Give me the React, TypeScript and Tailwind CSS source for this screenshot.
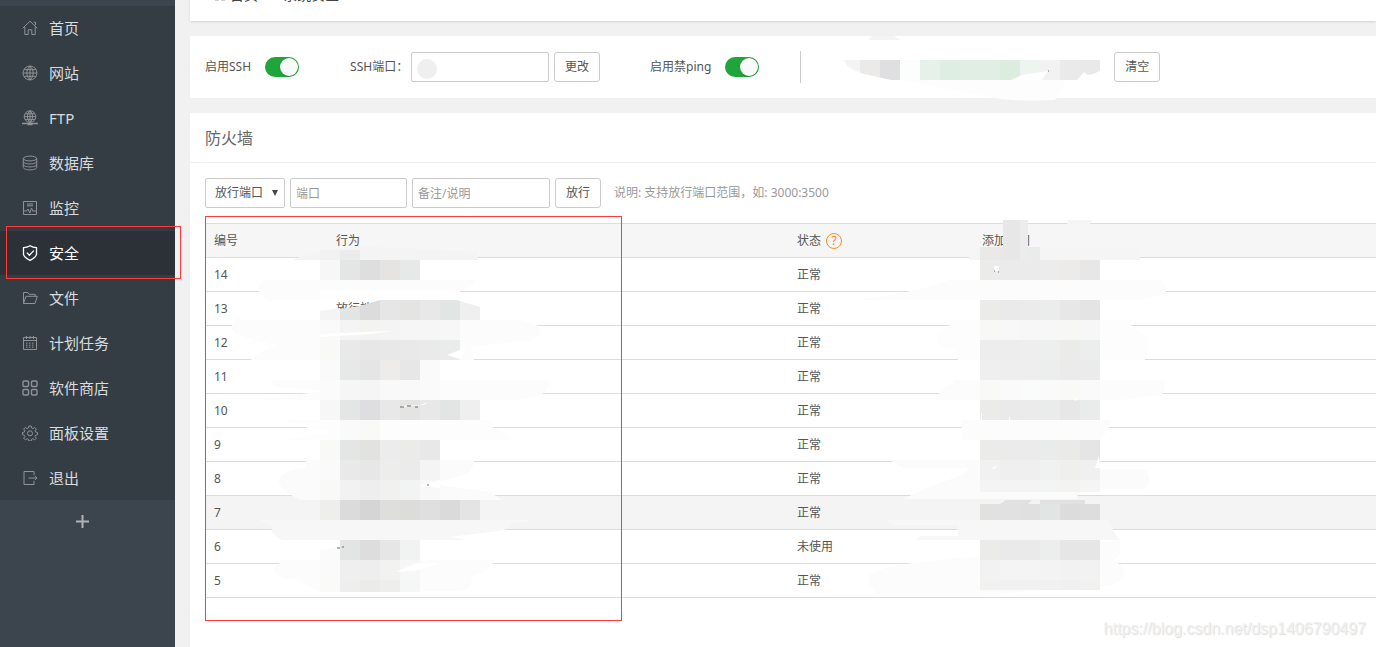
import type { ReactNode } from "react"
import { useState } from "react"

const menuItems: { label: string; icon: ReactNode }[] = [
  {
    label: "首页",
    icon: <path d="M.7 8.3 8 1.2l7.3 7.1M11.8 2.2h1.7v3M2.8 7v7.5h3.4V9.8h3.6v4.7h3.4V7" />,
  },
  {
    label: "网站",
    icon: <path d="M8 1a7 7 0 1 0 0 14A7 7 0 0 0 8 1ZM1 8h14M2 4.7h12M2 11.3h12M8 1v14M8 1C3.8 4.6 3.8 11.4 8 15M8 1c4.200 3.600 4.200 10.400 0 14" />,
  },
  {
    label: "FTP",
    icon: (
      <>
        <path d="M8 .8a5.800 5.800 0 1 0 0 11.600A5.800 5.800 0 0 0 8 .8ZM2.200 6.600h11.600M3 3.800h10M3 9.400h10M8 .8v11.600M8 .8c-3.400 3-3.400 8.600 0 11.600M8 .8c3.400 3 3.400 8.600 0 11.600" />
        <path d="M0 13.500h16M5.500 14.500h5" strokeWidth="1.600" />
      </>
    ),
  },
  {
    label: "数据库",
    icon: (
      <>
        <ellipse cx="8" cy="3.500" rx="6.700" ry="2.400" />
        <path d="M1.300 3.500v9c0 1.300 3 2.400 6.700 2.400s6.700-1.100 6.700-2.400v-9M1.300 6.500c0 1.300 3 2.400 6.700 2.400s6.700-1.100 6.700-2.400M1.300 9.500c0 1.300 3 2.400 6.700 2.400s6.700-1.100 6.700-2.400" />
      </>
    ),
  },
  {
    label: "监控",
    icon: <path d="M1.500 1.500h13v13h-13ZM5 4h6M5 5.800h6M1.500 11h3l1.500-2 1.800 4L9.500 8l1.200 3h3.800" />,
  },
  {
    label: "安全",
    icon: (
      <path
        d="M8 .8C6 2.100 3.800 2.700 1.500 2.700v6.200c0 3 3.500 5 6.500 6.500 3-1.500 6.500-3.500 6.500-6.500V2.700C12.200 2.700 10 2.100 8 .8ZM4.800 7.600l2.600 2.600 4.400-4.600"
        strokeWidth="1.300"
      />
    ),
  },
  {
    label: "文件",
    icon: <path d="M1.500 13.500v-11h4.300l1.400 1.800h6v2M1.500 13.500 4 6.300h11.300l-2.300 7.200Z" />,
  },
  {
    label: "计划任务",
    icon: (
      <>
        <path d="M1.500 2.500h13v12h-13ZM1.500 5.500h13M4.500 1v3M8 1v3M11.500 1v3" />
        <path d="M4 8.200h8M4 10.200h8M4 12.200h8" strokeDasharray="1.500 1.500" />
      </>
    ),
  },
  {
    label: "软件商店",
    icon: (
      <g strokeWidth="1.400">
        <rect x="1" y="1" width="5.500" height="5.500" rx="1" />
        <rect x="9.500" y="1" width="5.500" height="5.500" rx="1" />
        <rect x="1" y="9.500" width="5.500" height="5.500" rx="1" />
        <rect x="9.500" y="9.500" width="5.500" height="5.500" rx="1" />
      </g>
    ),
  },
  {
    label: "面板设置",
    icon: (
      <>
        <path d="M6.800 1h2.400l.4 2 1.300.6 1.700-1.200 1.700 1.700-1.200 1.700.6 1.300 1.800.4v2.200l-1.800.5-.6 1.300 1.200 1.700-1.700 1.700-1.700-1.200-1.300.6-.4 1.700H6.800l-.4-1.700-1.300-.6-1.700 1.200-1.700-1.700 1.200-1.700-.6-1.300-1.800-.5V7.500l1.800-.4.6-1.300-1.200-1.700 1.700-1.700 1.700 1.200 1.300-.6Z" />
        <circle cx="8" cy="8.300" r="2.500" />
      </>
    ),
  },
  {
    label: "退出",
    icon: <path d="M12 5V1.500H2v13h10V11M6.500 8h8.500M12.800 5.800 15 8l-2.200 2.200" />,
  },
]

const rules = [
  { id: 14, action: "", status: "正常" },
  { id: 13, action: "放行端口", status: "正常" },
  { id: 12, action: "", status: "正常" },
  { id: 11, action: "", status: "正常" },
  { id: 10, action: "", status: "正常" },
  { id: 9, action: "", status: "正常" },
  { id: 8, action: "", status: "正常" },
  { id: 7, action: "", status: "正常" },
  { id: 6, action: "", status: "未使用" },
  { id: 5, action: "", status: "正常" },
]

// Soft strokes that hide the row lines around the mosaic
const smears: { d: string; fill: string }[] = [
  { d: "M292 260l8-3 20-5 40-6 118 6v8Z", fill: "#f4f4f4" },
  { d: "M264 280h212q-3 8-16 11v4l-80 5-60 0h-52q-16-8-4-20Z", fill: "#fcfcfc" },
  { d: "M320 290h140v12H320Z", fill: "#fefefe" },
  { d: "M240 315v5h280q22 4 21 12-4 9-20 9l-50 6 3 13H251q6-9 26-14l-40-11q-12-10 3-18Z", fill: "#fcfcfc" },
  { d: "M270 380h278q3 10-8 15-14 5-30 5H255l70-9-50-4Z", fill: "#fcfcfc" },
  { d: "M278 420h215v8q14 4 17 12H280l56-8-29-4v-4Z", fill: "#fdfdfd" },
  { d: "M306 460h168q0 12-14 16l-30 8 60 8 12 8H300q-22-11-21-20 2-10 27-12Z", fill: "#fbfbfb" },
  { d: "M259 520h275l-24 4q0 6-12 7l-48 6 16 3H282q-12-6-10-13Z", fill: "#f7f7f7" },
  { d: "M320 550l20-4v-6h80v20H320Z", fill: "#fbfbfb" },
  { d: "M282 560h212q-2 10-22 16 0 14-12 15H320q-16-6-20-11-24-1-26-10Z", fill: "#fcfcfc" },
  { d: "M969 249h173l-2 11H969ZM1067 224l1-4h24l-2 4Z", fill: "#f5f5f5" },
  { d: "M860 299q50-5 90-19h212q6 8 3 14l-25 6H860Z", fill: "#fcfcfc" },
  { d: "M949 320h183l-1 8q18 4 18 20l-4 12H958l-2-10q-20-2-19-14 2-9 14-11Z", fill: "#fdfdfd" },
  { d: "M951 380h213q3 12-4 15l-40 5H938l1-8q4-6 16-9Z", fill: "#fcfcfc" },
  { d: "M961 420h150l-3 10-8 10H963Z", fill: "#fcfcfc" },
  { d: "M890 460h208l-2 9h48q10 10 0 20h-64l-4 10H903q28-14 60-24l6-7h-66Z", fill: "#fbfbfb" },
  { d: "M887 520h220l12 20h-203l4-4h38l-1-11h-63Z", fill: "#f7f7f7" },
  { d: "M942 560l178-20v14l-6 6q13 8 11 16-6 10-25 10l-120 9H880q-14-8-11-20 12-10 73-15Z", fill: "#fcfcfc" },
  { d: "M868 40l4-4h22l7 4Z", fill: "#f4f4f4" },
  { d: "M900 80h166l-11 20q-40 2-60-2-50-10-95-18Z", fill: "#fdfdfd" },
]

// Each strip is a line of 20px wide blocks
const strips: { x: number; y: number; h: number; fills: string[] }[] = [
  { x: 320, y: 250, h: 10, fills: ["#f1f1f1", "#ebebeb"] },
  { x: 320, y: 260, h: 20, fills: ["#f7f7f7", "#e3e6e5", "#dedede", "#e6e4e2", "#e7e9e8"] },
  { x: 320, y: 320, h: 20, fills: ["#fafafa", "#f4f4f4", "#f3f3f1", "#f4f4f4", "#f6f6f6", "#f6f6f6", "#f7f7f7"] },
  { x: 320, y: 340, h: 20, fills: ["#f9f9f8", "#e9e9e9", "#e7e7e7", "#e8e8e8", "#e9e9e9", "#eaeaea", "#eaeceb"] },
  { x: 320, y: 360, h: 20, fills: ["#fafafa", "#e6e9e8", "#e5e5e5", "#eeecea", "#e7e7e7", "#fafafa"] },
  { x: 320, y: 380, h: 20, fills: ["#fbfbfb", "#f6f6f6", "#f5f5f5", "#f9f9f9", "#f9f9f9", "#fafafa"] },
  { x: 320, y: 400, h: 20, fills: ["#f7f7f7", "#e3e6e5", "#dedee0", "#e8e8e8", "#e4e4e3", "#e8e8e8", "#e3e5e4", "#efefef"] },
  { x: 340, y: 420, h: 20, fills: ["#fafafa", "#f9f9f7"] },
  { x: 320, y: 440, h: 20, fills: ["#f9f9f8", "#e4e6e5", "#e2e2e0", "#ececec", "#ebebe9", "#e8e8e8"] },
  { x: 320, y: 460, h: 20, fills: ["#fafafa", "#e9e9e9", "#e7e7e7", "#ededeb", "#ebebec", "#f4f4f4"] },
  { x: 320, y: 480, h: 20, fills: ["#f9f9f8", "#f2f2f2", "#eeeeee", "#f1f1ef", "#f2f4f3", "#f8f8f8"] },
  { x: 320, y: 500, h: 20, fills: ["#eeeeed", "#dbdbdb", "#d5d5d5", "#dededd", "#dcdcda", "#dfdfdf", "#dadada", "#e4e4e4"] },
  { x: 340, y: 540, h: 20, fills: ["#e3e5e4", "#dddddd", "#e6e6e6", "#f1f3f2"] },
  { x: 320, y: 560, h: 20, fills: ["#fafafa", "#efefef", "#eeeeee", "#f2f2f0", "#f7f7f7"] },
  { x: 320, y: 580, h: 12, fills: ["#fafaf8", "#eeeeee", "#ebebe9", "#eeeeec", "#f5f6f6"] },
  { x: 980, y: 247, h: 13, fills: ["#eae9e8", "#e7e9e8", "#ebebeb"] },
  { x: 980, y: 260, h: 20, fills: ["#ebebea", "#ebebeb", "#ebebeb", "#ececec", "#ecebe9", "#e7e7e7"] },
  { x: 980, y: 300, h: 20, fills: ["#ebebe9", "#eaeaea", "#ebebeb", "#eaedec", "#e7e7e7", "#e4e4e4"] },
  { x: 980, y: 320, h: 20, fills: ["#f8f8f6", "#f8f8f8", "#f7f7f7", "#f7f7f7", "#f7f7f5", "#f7f7f7"] },
  { x: 980, y: 340, h: 20, fills: ["#ededed", "#ededed", "#eeeeee", "#edefee", "#ebebe9", "#eceeed"] },
  { x: 980, y: 360, h: 20, fills: ["#efefef", "#eeeeee", "#edeeed", "#eceeee", "#ebebeb", "#ebebeb"] },
  { x: 980, y: 380, h: 20, fills: ["#f9f9f8", "#fafafa", "#fafcfb", "#fafafa", "#f9f9f8", "#fafafa"] },
  { x: 980, y: 400, h: 20, fills: ["#ebebe9", "#eaeaea", "#ebebeb", "#eaecec", "#e7e7e7", "#eaeceb"] },
  { x: 980, y: 440, h: 20, fills: ["#ebebe9", "#ebebeb", "#ebebeb", "#eaecec", "#eaeae9", "#e5e5e5"] },
  { x: 980, y: 460, h: 20, fills: ["#f1f1f1", "#efefef", "#efefef", "#f0f2f1", "#efefee", "#f0f0f0"] },
  { x: 980, y: 480, h: 12, fills: ["#f4f4f4", "#f4f4f4", "#f4f4f4", "#f3f5f4", "#f3f3f1", "#f4f5f4"] },
  { x: 980, y: 504, h: 16, fills: ["#e1e1e0", "#e1e1e1", "#e0e0e0", "#e2e5e4", "#dcdcdc", "#dddddd"] },
  { x: 980, y: 540, h: 20, fills: ["#ebebe9", "#eaeaea", "#eaeaea", "#eceeed", "#e6e6e6", "#e6e6e6"] },
  { x: 980, y: 560, h: 20, fills: ["#f2f2f2", "#f4f4f4", "#f4f4f4", "#f3f3f3", "#f2f2f2", "#f2f2f2"] },
  { x: 980, y: 580, h: 10, fills: ["#f1f1f0", "#f1f1f1", "#f1f1f1", "#f1f1f1", "#f0f0f0", "#f1f1ef"] },
  { x: 860, y: 60, h: 20, fills: ["#ebeae9", "#dfdfe2", "#fcfefd", "#e6f1e9", "#dfeee3", "#e0eee4", "#e0eee4", "#dcecdf", "#eef5f0", "#f2f2f2", "#eaeaea", "#e9e9e9"] },
]

function Mosaic() {
  return (
    <svg
      className="pointer-events-none absolute left-0 top-0"
      width="1200"
      height="640"
      aria-hidden="true"
    >
      {smears.map((smear) => (
        <path key={smear.d} d={smear.d} fill={smear.fill} />
      ))}
      <g shapeRendering="crispEdges">
        {strips.map((strip) =>
          strip.fills.map((fill, i) => (
            <rect
              key={`${strip.x}-${strip.y}-${i}`}
              x={strip.x + i * 20}
              y={strip.y}
              width="20"
              height={strip.h}
              fill={fill}
            />
          ))
        )}
        <path d="M1003 220h17v40h-17Z" fill="#e7e7e7" />
        <path d="M1020 220h8v40h-8Z" fill="#ececec" />
      </g>

      {/* Row 13 leaves the tops of the characters visible */}
      <path d="M320 311l20-3v12h-20Z" fill="#f4f4f4" />
      <path d="M340 309l20-3v14h-20Z" fill="#e3e5e4" />
      <path d="M360 306l20-6v20h-20Z" fill="#dcdcdd" />
      <path d="M380 300h20v20h-20Z" fill="#e6e6e6" />
      <path d="M400 300h20v20h-20Z" fill="#e4e4e3" />
      <path d="M420 300h20v20h-20Z" fill="#e8e8e8" />
      <path d="M440 300h16l4 1v19h-20Z" fill="#e1e5e4" />
      <path d="M460 301l20 6v13h-20Z" fill="#efefef" />

      {/* Gaps between strokes */}
      <g fill="#fff">
        <path d="M320 334l40-2 32-1-20 3-52 3ZM447 355l20-8-7 12ZM402 406l18-1 8-3-4 3-22 2Z" />
        <path d="M420 486l20-6v8ZM396 572l20-9h24l-20 7ZM994 266h5v5h-5ZM992 468l6-3-4 4Z" />
        <path d="M1074 400l5-4-3 5ZM1099 456l-4 12h5ZM981 413h1v10h-1ZM1009 417h1v7h-1Z" />
        <path d="M1011 80l11-5 26-4-6 9ZM844 68l20 6 27 6h-31l-16-4ZM1084 72l4 3 5-1 7-3v9h-23Z" />
      </g>
      <path d="M1000 504l6-4h26l-4 4ZM1040 504v-4h45v4Z" fill="#e1e1e1" />
      <path d="M844 60h16v12q-13-2-16-12Z" fill="#f4f4f4" />
      <path d="M400 407h4m3-1h4m4 1h3M337 548h3m2-1h2M427 485h2M994 271h1m3 1h1M1048 71h1" stroke="#666" />
      <circle cx="427" cy="69" r="10" fill="#efefef" />
    </svg>
  )
}

function Toggle({ id, label }: { id: string; label: string }) {
  const [on, setOn] = useState(true)

  return (
    <div className="flex items-center gap-3.5">
      <label htmlFor={id}>{label}</label>
      <input
        id={id}
        type="checkbox"
        role="switch"
        checked={on}
        onChange={() => setOn(!on)}
        className="h-5 w-[34px] cursor-pointer appearance-none rounded-full bg-gray-300 p-px before:block before:size-[18px] before:rounded-full before:bg-[#fafafa] before:shadow checked:bg-[#20a53a] checked:before:ml-auto"
      />
    </div>
  )
}

const inputClass =
  "h-[30px] rounded-xs border border-[#ccc] bg-white px-[5px] text-xs placeholder:text-[#999] focus:outline-none"
const buttonClass =
  "h-[30px] w-[46px] shrink-0 cursor-pointer rounded-[3px] border border-[#ccc] bg-white hover:bg-gray-100"

function Sidebar() {
  return (
    <aside className="w-[175px] shrink-0 bg-[#3c444d] pt-1.5">
      <nav className="flex flex-col gap-px bg-[#353d44]">
        {menuItems.map((item) => {
          const active = item.label === "安全"
          return (
            <a
              key={item.label}
              href="#"
              className={`flex h-11 items-center gap-[11px] pl-[22px] text-[15px] ${
                active ? "bg-[#2c3138] text-white" : "text-[#d9dcde]"
              }`}
            >
              <svg
                viewBox="0 0 16 16"
                className={`size-4 ${active ? "text-white" : "text-[#8e9396]"}`}
                fill="none"
                stroke="currentColor"
                aria-hidden="true"
              >
                {item.icon}
              </svg>
              {item.label}
            </a>
          )
        })}
      </nav>
      <button className="mt-[15px] ml-[76px] block cursor-pointer text-[#b0b3b6]" aria-label="添加菜单">
        <svg viewBox="0 0 13 13" className="size-[13px]" stroke="currentColor" strokeWidth="2" aria-hidden="true">
          <path d="M6.500 0v13M0 6.500h13" />
        </svg>
      </button>
    </aside>
  )
}

export default function App() {
  return (
    <div className="relative flex min-h-screen overflow-hidden bg-[#f1f1f1] font-['Noto_Sans','Noto_Sans_CJK_SC',sans-serif] text-xs text-[#555]">
      <Sidebar />

      <main className="ml-[15px] flex min-w-0 flex-1 flex-col gap-[15px]">
        {/* Breadcrumb, scrolled mostly out of view */}
        <div className="-mt-7 flex h-[49px] shrink-0 items-center gap-2.5 bg-white pb-1 pl-6 text-sm text-[#444] shadow-sm">
          <a href="#" className="flex items-center gap-1">
            <svg viewBox="0 0 12 12" className="size-3" fill="none" stroke="#999" aria-hidden="true">
              <path d="M1 1h4v4H1ZM7 1h4v4H7ZM1 7h4v4H1ZM7 7h4v4H7Z" />
            </svg>
            首页
          </a>
          <span className="text-[#888]">/</span>
          <span>系统安全</span>
        </div>

        <section className="flex h-[62px] shrink-0 items-center bg-white pl-[15px]">
          <Toggle id="ssh" label="启用SSH" />
          <div className="ml-[51px] flex items-center gap-[5px]">
            <label htmlFor="ssh-port" className="w-14 whitespace-nowrap">
              SSH端口：
            </label>
            <input id="ssh-port" type="text" className={`w-[138px] ${inputClass}`} />
            <button className={buttonClass}>更改</button>
          </div>
          <div className="ml-[50px]">
            <Toggle id="ping" label="启用禁ping" />
          </div>
          <div className="ml-[41px] h-8 border-l border-[#ccc]" />
          <button className={`ml-[313px] ${buttonClass}`}>清空</button>
        </section>

        <section className="flex-1 bg-white">
          <h1 className="flex h-[50px] items-center border-b border-[#eee] pl-[15px] text-base text-[#666]">防火墙</h1>

          <div className="pt-[15px] pl-[15px]">
            <form className="flex items-center gap-[5px]" onSubmit={(e) => e.preventDefault()}>
              <div className="relative">
                <select
                  aria-label="类型"
                  className="h-[30px] w-20 appearance-none rounded-xs border border-[#ccc] bg-white pl-[9px] text-xs"
                >
                  <option>放行端口</option>
                  <option>屏蔽IP</option>
                </select>
                <svg
                  viewBox="0 0 6 6"
                  className="pointer-events-none absolute top-3 right-[7px] size-1.5"
                  fill="#444"
                  aria-hidden="true"
                >
                  <path d="M0 0h6L3 6Z" />
                </svg>
              </div>
              <input type="text" placeholder="端口" aria-label="端口" className={`w-[117px] ${inputClass}`} />
              <input type="text" placeholder="备注/说明" aria-label="备注/说明" className={`w-[138px] ${inputClass}`} />
              <button className={buttonClass}>放行</button>
              <span className="ml-2 whitespace-nowrap text-[#999]">说明: 支持放行端口范围，如: 3000:3500</span>
            </form>

            <table className="mt-[15px] w-full table-fixed border-collapse border-t border-[#ddd] text-left text-[#555]">
              <thead>
                <tr className="h-[34px] border-b border-[#ddd] bg-[#f6f6f6]">
                  <th className="w-[123px] pl-[9px] font-normal">编号</th>
                  <th className="w-[461px] pl-2 font-normal">行为</th>
                  <th className="w-[185px] pl-2 font-normal">
                    <span className="flex items-center gap-[5px]">
                      状态
                      <a
                        href="#"
                        aria-label="状态说明"
                        className="flex size-4 items-center justify-center rounded-full border border-[#ff8a1e] text-[#ff7f0e]"
                      >
                        ?
                      </a>
                    </span>
                  </th>
                  <th className="pl-2 font-normal">添加时间</th>
                </tr>
              </thead>
              <tbody>
                {rules.map((rule) => (
                  <tr
                    key={rule.id}
                    className={`h-[34px] border-b border-[#ddd] ${rule.id === 7 ? "bg-[#f4f4f4]" : ""}`}
                  >
                    <td className="pl-[9px]">{rule.id}</td>
                    <td className="pl-2">{rule.action}</td>
                    <td className="pl-2">{rule.status}</td>
                    <td />
                  </tr>
                ))}
              </tbody>
            </table>
          </div>
        </section>
      </main>

      <Mosaic />

      {/* Highlight boxes */}
      <div className="pointer-events-none absolute top-[226px] left-1.5 h-[53px] w-[175px] border border-[#ff3b3b]" />
      <div className="pointer-events-none absolute top-[216px] left-[205px] h-[405px] w-[417px] border border-[#ff3b3b]" />

      <p className="absolute right-2.5 bottom-1.5 font-['Liberation_Sans',sans-serif] text-base text-[#f0f0f0] [text-shadow:1px_1px_1px_#ddd]">
        https://blog.csdn.net/dsp1406790497
      </p>
    </div>
  )
}
